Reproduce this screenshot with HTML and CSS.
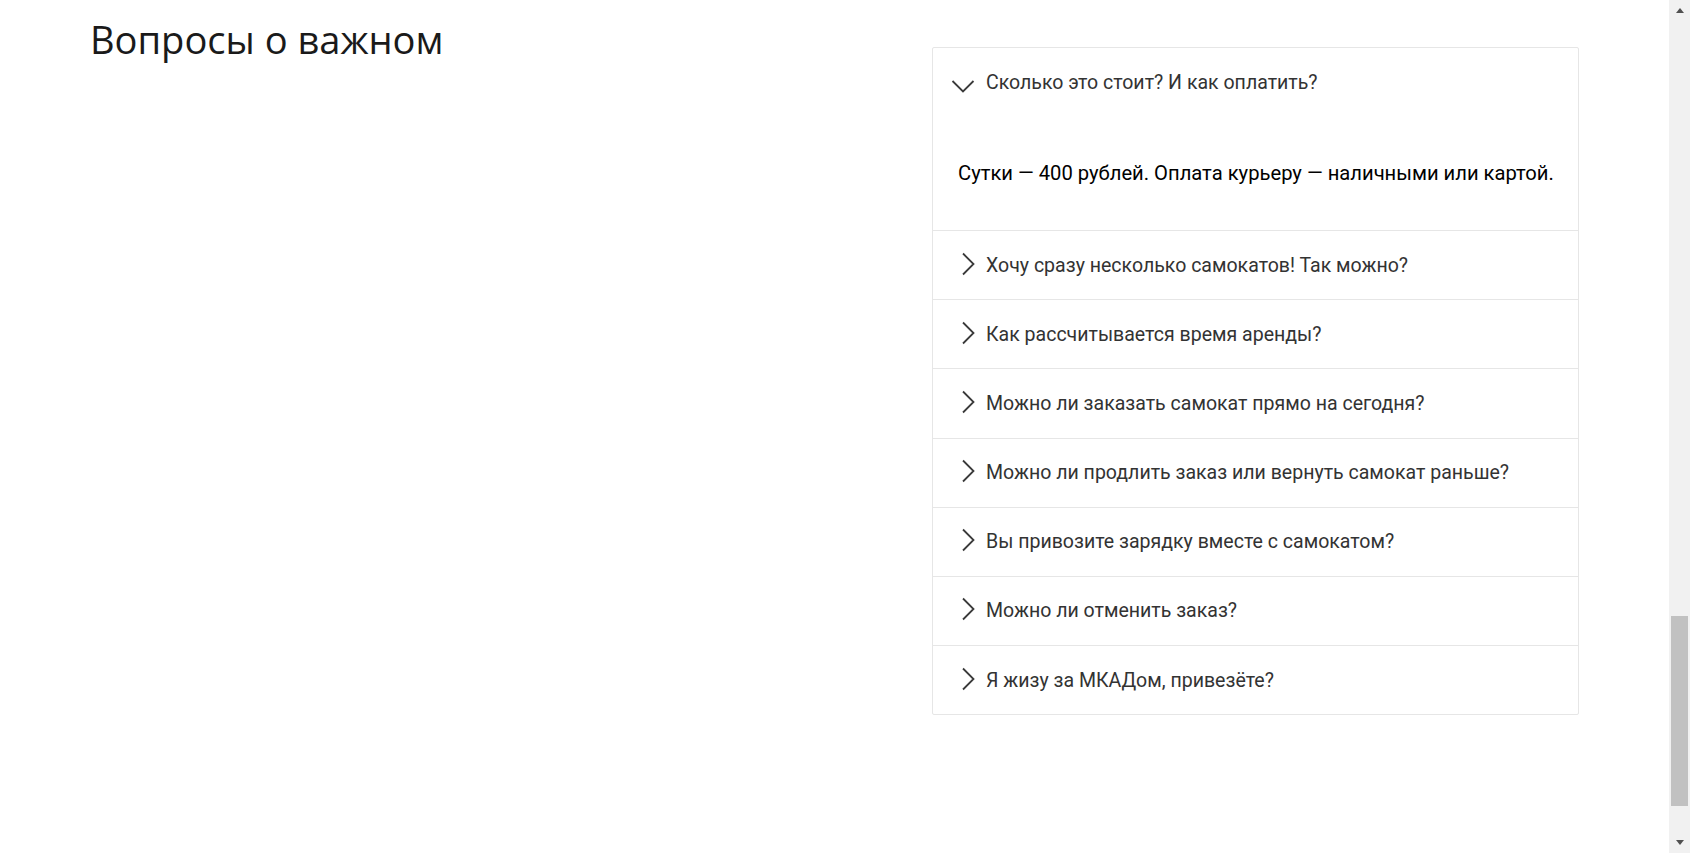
FILE: index.html
```html
<!DOCTYPE html>
<html lang="ru">
<head>
<meta charset="utf-8">
<title>Вопросы о важном</title>
<link rel="stylesheet" href="styles.css">
</head>
<body>
<div class="page">
  <main class="content">
    <section class="faq">
      <h2 class="faq-title">Вопросы о важном</h2>
      <div class="accordion">
        <div class="item is-open">
          <div class="question">
            <svg class="chevron" viewBox="0 0 24 24" width="24" height="24"><path d="M1.5 12 L12 22.5 L22.5 12"/></svg>
            <span>Сколько это стоит? И как оплатить?</span>
          </div>
          <div class="answer">Сутки — 400 рублей. Оплата курьеру — наличными или картой.</div>
        </div>
        <div class="item">
          <div class="question">
            <svg class="chevron" viewBox="0 0 24 24" width="24" height="24"><path d="M12 1.5 L22.5 12 L12 22.5"/></svg>
            <span>Хочу сразу несколько самокатов! Так можно?</span>
          </div>
        </div>
        <div class="item">
          <div class="question">
            <svg class="chevron" viewBox="0 0 24 24" width="24" height="24"><path d="M12 1.5 L22.5 12 L12 22.5"/></svg>
            <span>Как рассчитывается время аренды?</span>
          </div>
        </div>
        <div class="item">
          <div class="question">
            <svg class="chevron" viewBox="0 0 24 24" width="24" height="24"><path d="M12 1.5 L22.5 12 L12 22.5"/></svg>
            <span>Можно ли заказать самокат прямо на сегодня?</span>
          </div>
        </div>
        <div class="item">
          <div class="question">
            <svg class="chevron" viewBox="0 0 24 24" width="24" height="24"><path d="M12 1.5 L22.5 12 L12 22.5"/></svg>
            <span>Можно ли продлить заказ или вернуть самокат раньше?</span>
          </div>
        </div>
        <div class="item">
          <div class="question">
            <svg class="chevron" viewBox="0 0 24 24" width="24" height="24"><path d="M12 1.5 L22.5 12 L12 22.5"/></svg>
            <span>Вы привозите зарядку вместе с самокатом?</span>
          </div>
        </div>
        <div class="item">
          <div class="question">
            <svg class="chevron" viewBox="0 0 24 24" width="24" height="24"><path d="M12 1.5 L22.5 12 L12 22.5"/></svg>
            <span>Можно ли отменить заказ?</span>
          </div>
        </div>
        <div class="item">
          <div class="question">
            <svg class="chevron" viewBox="0 0 24 24" width="24" height="24"><path d="M12 1.5 L22.5 12 L12 22.5"/></svg>
            <span>Я жизу за МКАДом, привезёте?</span>
          </div>
        </div>
      </div>
    </section>
  </main>
  <aside class="scrollbar">
    <div class="sb-arrow sb-up"></div>
    <div class="sb-track"><div class="sb-thumb"></div></div>
    <div class="sb-arrow sb-down"></div>
  </aside>
</div>
</body>
</html>
```
FILE: styles.css
```css
* { box-sizing: border-box; }
html, body { margin: 0; padding: 0; height: 100%; overflow: hidden; background: #fff; }
body { font-family: Roboto, "Noto Sans", sans-serif; }
.page { display: flex; height: 853px; }
.content { flex: 1; padding: 0 90px 0 90px; }
.faq { display: flex; justify-content: space-between; align-items: flex-start; padding-top: 47px; }
.faq-title {
  margin: -30.5px 0 0 0;
  font-family: "Open Sans", sans-serif;
  font-weight: 400;
  font-size: 38.1px;
  line-height: 44px;
  color: #1a1a1a;
}
.accordion { width: 647px; border: 1px solid #e6e6e6; border-radius: 2px; }
.item + .item { border-top: 1px solid #e6e6e6; }
.item { height: 69.15px; }
.item.is-open { height: auto; }
.question {
  display: flex; align-items: center; height: 68.15px;
  padding-left: 18px; font-size: 19.55px; color: #333;
}
.question span { margin-left: 1px; }
.chevron { flex: none; margin: 0 10px 3px 0; fill: none; stroke: #3a3a3a; stroke-width: 1.8; }
.answer {
  height: 114px; padding: 0 10px 0 25px; display: flex; align-items: center;
  font-size: 20.2px; color: #000; white-space: nowrap;
}
.scrollbar { width: 21px; flex: none; background: #f1f1f1; display: flex; flex-direction: column; }
.sb-arrow { height: 21px; display: flex; align-items: center; justify-content: center; }
.sb-up::before { content: ""; border-left: 4.5px solid transparent; border-right: 4.5px solid transparent; border-bottom: 5px solid #505050; }
.sb-down::before { content: ""; border-left: 4.5px solid transparent; border-right: 4.5px solid transparent; border-top: 5px solid #505050; }
.sb-track { flex: 1; display: flex; flex-direction: column; padding: 595px 2px 0; }
.sb-thumb { height: 190px; background: #c1c1c1; }
```
